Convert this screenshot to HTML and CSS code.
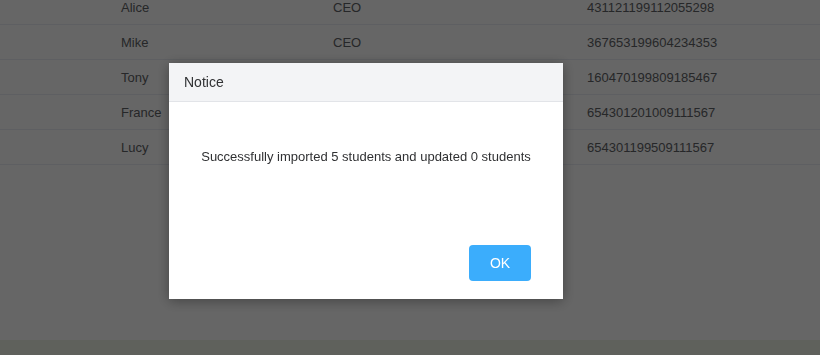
FILE: index.html
```html
<!DOCTYPE html>
<html lang="en">
<head>
    <meta charset="UTF-8">
    <meta name="viewport" content="width=device-width, initial-scale=1.0">
    <title>Students</title>
    <link rel="stylesheet" href="styles.css">
</head>
<body>
    <div class="page">
        <div class="student-table">
            <div class="row"><span></span><span>Alice</span><span>CEO</span><span>431121199112055298</span></div>
            <div class="row"><span></span><span>Mike</span><span>CEO</span><span>367653199604234353</span></div>
            <div class="row"><span></span><span>Tony</span><span>CEO</span><span>160470199809185467</span></div>
            <div class="row"><span></span><span>France</span><span>CEO</span><span>654301201009111567</span></div>
            <div class="row"><span></span><span>Lucy</span><span>CEO</span><span>654301199509111567</span></div>
        </div>
        <div class="spacer"></div>
        <div class="footer"></div>
    </div>

    <!-- import result dialog -->
    <div class="overlay">
        <div class="dialog">
            <div class="dialog-header">Notice</div>
            <div class="dialog-body">
                <p class="dialog-message">Successfully imported 5 students and updated 0 students</p>
                <div class="dialog-footer">
                    <button class="btn btn-primary">OK</button>
                </div>
            </div>
        </div>
    </div>
</body>
</html>
```

FILE: styles.css
```css
html, body {
    height: 100%;
}
body {
    font-family: "Liberation Sans", Arial, sans-serif;
    background-color: #ffffff;
    color: #606266;
    margin: 0;
    overflow: hidden;
}
.page {
    display: flex;
    flex-direction: column;
    height: 100%;
}
.student-table {
    margin-top: -10px;
}
.row {
    display: grid;
    grid-template-columns: 121px 212px 254px 1fr;
    align-items: center;
    height: 34px;
    border-bottom: 1px solid #ebeef5;
    font-size: 13px;
}
.spacer {
    flex: 1;
}
.footer {
    height: 15px;
    background-color: #edf2e6;
}
.overlay {
    position: fixed;
    inset: 0;
    background-color: rgba(0, 0, 0, 0.6);
}
.dialog {
    margin: 63px 0 0 169px;
    width: 394px;
    height: 236px;
    background-color: #fff;
    box-shadow: 0 2px 12px rgba(0, 0, 0, 0.35);
    display: flex;
    flex-direction: column;
}
.dialog-header {
    height: 38px;
    line-height: 38px;
    padding: 0 15px;
    background-color: #f3f4f6;
    border-bottom: 1px solid #e2e4e8;
    font-size: 14px;
    color: #303133;
}
.dialog-body {
    flex: 1;
    display: flex;
    flex-direction: column;
    padding: 45px 32px 18px;
}
.dialog-message {
    margin: 0;
    font-size: 13px;
    line-height: 20px;
    text-align: center;
    color: #303133;
}
.dialog-footer {
    margin-top: auto;
    display: flex;
    justify-content: flex-end;
}
.btn {
    width: 62px;
    height: 36px;
    border: none;
    border-radius: 4px;
    cursor: pointer;
    font-family: inherit;
    font-size: 14px;
}
.btn-primary {
    background-color: #3badfc;
    color: #fff;
}
```
